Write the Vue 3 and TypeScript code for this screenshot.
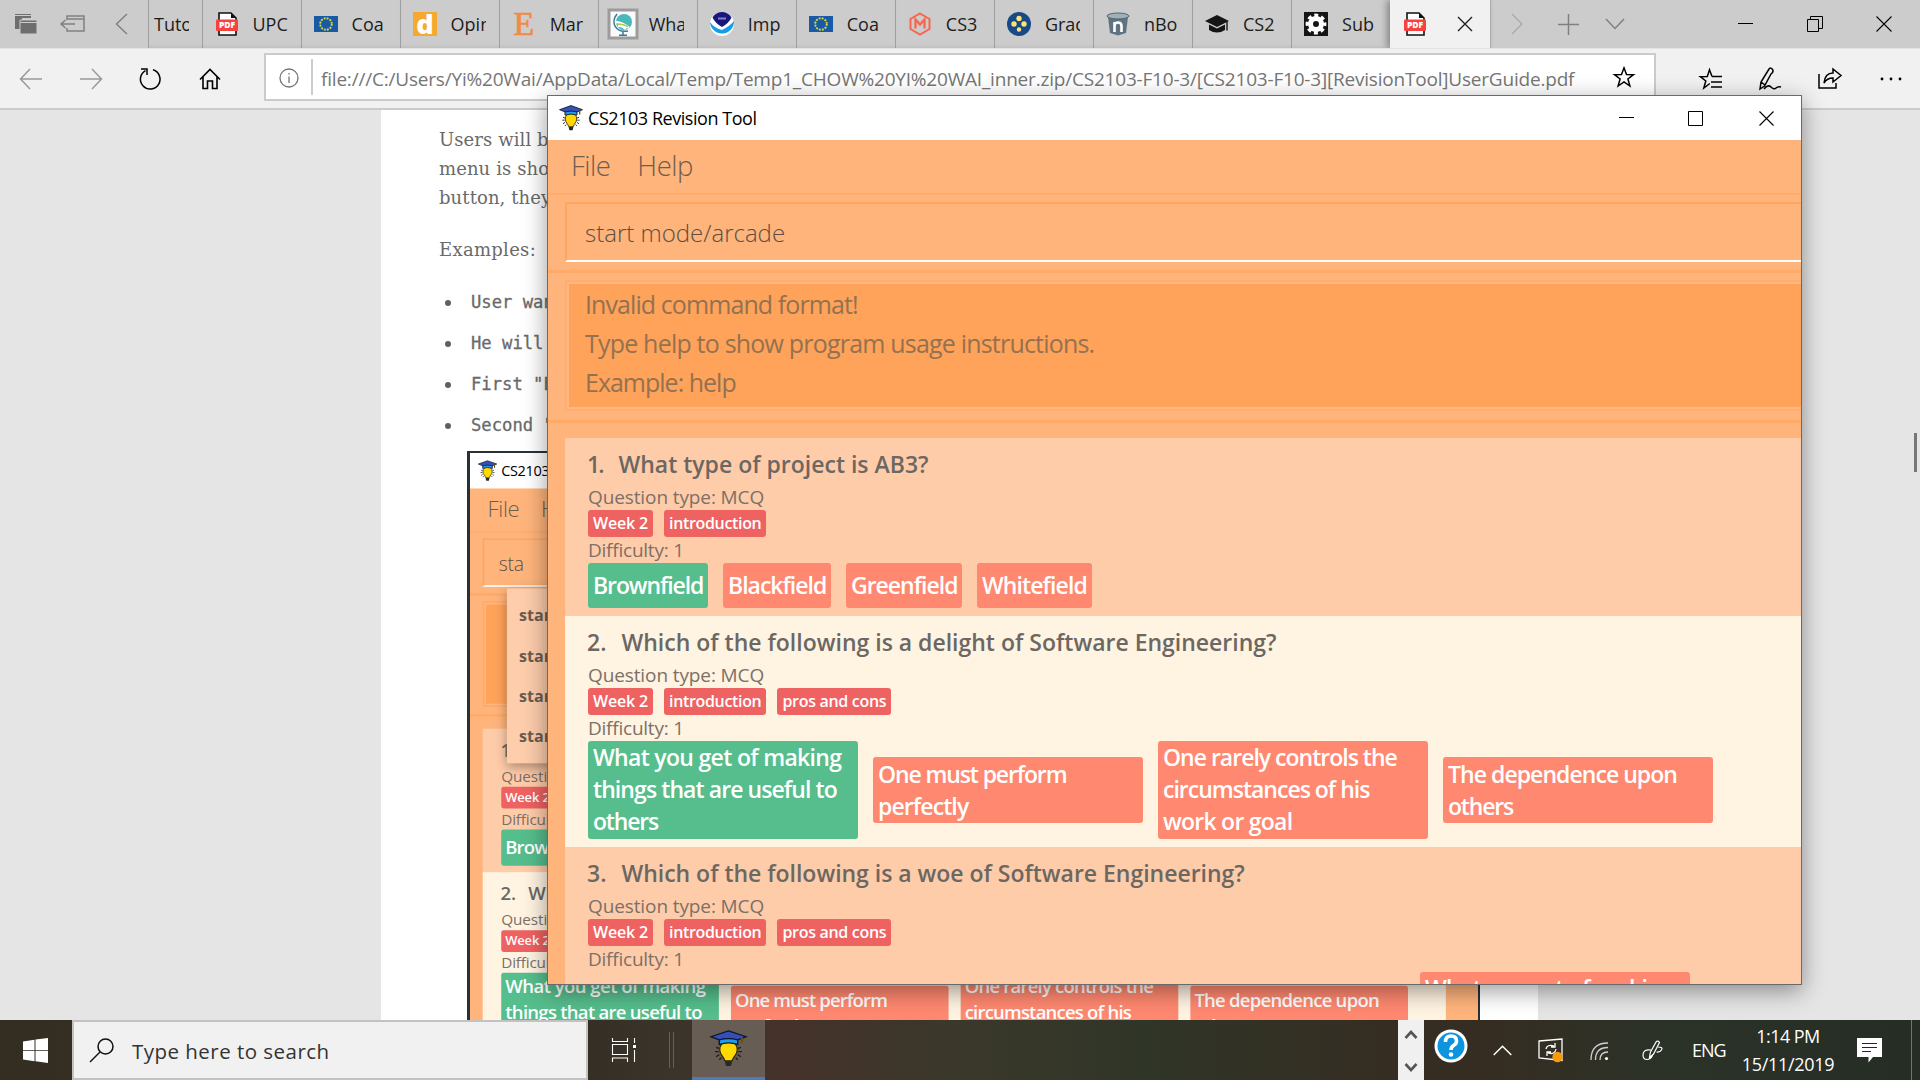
<script setup lang="ts">
interface Tag { text: string; w: number }
interface Line { text: string; w: number }
interface Answer { lines: Line[]; w: number; ok?: boolean }
interface Question { n: string; title: string; nw: number; gap: number; w: number; tags: Tag[]; answers: Answer[] }
interface ToolWindow { kind: string; input: string; inputW: number; result: Line[]; suggestions: string[] }

// Spreads the letters of a single line so that it fills the given width.
const vFit = {
  mounted(el: HTMLElement, binding: { value: number }) {
    const n = (el.textContent || '').length
    if (!n || !binding.value) return
    el.style.letterSpacing = '0px'
    const natural = el.offsetWidth
    el.style.letterSpacing = ((binding.value - natural) / n).toFixed(3) + 'px'
  },
}

const week: Tag = { text: 'Week 2', w: 55 }
const intro: Tag = { text: 'introduction', w: 92 }
const pros: Tag = { text: 'pros and cons', w: 104 }

const questions: Question[] = [
  {
    n: '1.', nw: 15, gap: 16, title: 'What type of project is AB3?', w: 310, tags: [week, intro],
    answers: [
      { w: 120, ok: true, lines: [{ text: 'Brownfield', w: 110 }] },
      { w: 108, lines: [{ text: 'Blackfield', w: 98 }] },
      { w: 116, lines: [{ text: 'Greenfield', w: 106 }] },
      { w: 115, lines: [{ text: 'Whitefield', w: 105 }] },
    ],
  },
  {
    n: '2.', nw: 19, gap: 15, title: 'Which of the following is a delight of Software Engineering?', w: 655, tags: [week, intro, pros],
    answers: [
      { w: 270, ok: true, lines: [{ text: 'What you get of making', w: 248 }, { text: 'things that are useful to', w: 244 }, { text: 'others', w: 65 }] },
      { w: 270, lines: [{ text: 'One must perform', w: 189 }, { text: 'perfectly', w: 90 }] },
      { w: 270, lines: [{ text: 'One rarely controls the', w: 234 }, { text: 'circumstances of his', w: 206 }, { text: 'work or goal', w: 129 }] },
      { w: 270, lines: [{ text: 'The dependence upon', w: 229 }, { text: 'others', w: 65 }] },
    ],
  },
  {
    n: '3.', nw: 19, gap: 15, title: 'Which of the following is a woe of Software Engineering?', w: 623, tags: [week, intro, pros],
    answers: [{ w: 270, lines: [{ text: 'What you get of making', w: 248 }, { text: 'things that are useful to', w: 244 }, { text: 'others', w: 65 }] }],
  },
]

const windows: ToolWindow[] = [
  { kind: 'inner', input: 'sta', inputW: 31, result: [], suggestions: ['start', 'start', 'start', 'start'] },
  {
    kind: 'main', input: 'start mode/arcade', inputW: 200, suggestions: [],
    result: [
      { text: 'Invalid command format!', w: 273 },
      { text: 'Type help to show program usage instructions.', w: 509 },
      { text: 'Example: help', w: 151 },
    ],
  },
]

const pdf = '<path d="M4 1h12l5 5v17H4z" fill="#fff" stroke="#111" stroke-width="1.6"/><path d="M16 1v5h5z" fill="#111"/><rect x="1" y="7.500" width="22" height="11.500" rx="1" fill="#f9423f"/><text x="12" y="16.300" text-anchor="middle" font-family="Open Sans, sans-serif" font-weight="800" font-size="8.500" fill="#fff">PDF</text>'
const eu = '<rect x="0" y="4" width="24" height="16" fill="#1a5aa5"/><circle cx="12" cy="12" r="5.800" fill="none" stroke="#d8d83a" stroke-width="1.900" stroke-dasharray="1.900 1.137"/>'

const tabs: { label: string; icon: string }[] = [
  { label: 'UPC', icon: pdf },
  { label: 'Coa', icon: eu },
  { label: 'Opin', icon: '<rect width="24" height="24" fill="#f5a930"/><text x="12" y="22" text-anchor="middle" font-family="Open Sans, sans-serif" font-weight="800" font-size="27" fill="#fff">d</text>' },
  { label: 'Mar', icon: '<text x="12" y="23" text-anchor="middle" font-family="Liberation Serif, serif" font-size="34" fill="#ef8b45" stroke="#ef8b45" stroke-width=".7">E</text>' },
  { label: 'Wha', icon: '<rect x="-2" y="-2" width="28" height="28" fill="#fafafa" stroke="#9c9c9c" stroke-width="3"/><circle cx="13" cy="10" r="8" fill="#48b8b9"/><path d="M5 10q7 1 13 6M7 14q4-1 8 3" stroke="#fff" stroke-width="2.500" fill="none"/><path d="M6 12q7 0 11 3" stroke="#a8cf45" stroke-width="1.500" fill="none"/><path d="M6 2c-7 9-1 19 11 17M12 20v3M8 23.300h8" stroke="#38799b" stroke-width="1.500" fill="none"/>' },
  { label: 'Imp', icon: '<circle cx="12" cy="12" r="12" fill="#fff"/><path d="M2.500 5.500Q6 0 12 0t9.500 5.500Q19 11 12 15 5 11 2.500 5.500z" fill="#19177c"/><path d="M0 10q4 6 12 8 8-4 12-9a12 12 0 0 1-24 1z" fill="#169de9"/><path d="M8 6.500h8" stroke="#8582c4" stroke-width="2"/>' },
  { label: 'Coa', icon: eu },
  { label: 'CS3', icon: '<path d="M12 1.500l9.500 5.500v10L12 22.500 2.500 17V7z" fill="none" stroke="#f7664e" stroke-width="2"/><path d="M7.500 16.500v-9l4.500 5 4.500-5v9" fill="none" stroke="#f7664e" stroke-width="2.300"/>' },
  { label: 'Grad', icon: '<circle cx="12" cy="12" r="12" fill="#174a86"/><g fill="#ffe174"><circle cx="12" cy="6.500" r="2.700"/><circle cx="7" cy="12" r="2.700"/><circle cx="17" cy="12" r="2.700"/><circle cx="12" cy="17.500" r="2.200"/></g>' },
  { label: 'nBo', icon: '<path d="M2 5h20l-2 16-8 2.500L4 21z" fill="#5e7480"/><ellipse cx="12" cy="4" rx="11" ry="3" fill="#9fb0b8" stroke="#52656f"/><path d="M8.500 20V10M8.500 14q0-3.500 3.500-3.500t3.500 3.500v6" fill="none" stroke="#fff" stroke-width="2.600"/>' },
  { label: 'CS2', icon: '<path d="M12 3l12 6-12 6L0 9z" fill="#151515"/><path d="M4 12.500v5.500q8 5 16 0v-5.500l-8 4z" fill="#151515"/><path d="M22 9.500v9" stroke="#151515" stroke-width="1.400"/>' },
  { label: 'Sub', icon: '<rect width="24" height="24" fill="#151515"/><circle cx="12" cy="12" r="5.500" fill="none" stroke="#fff" stroke-width="5"/><circle cx="12" cy="12" r="8.800" fill="none" stroke="#fff" stroke-width="3.200" stroke-dasharray="3.900 3.010" stroke-dashoffset="1.950"/>' },
]

const bulb = '<g stroke="#241d18" stroke-width="1.300" fill="none"><path d="M6 17l3 1M5 21h3.500M6 26l3-2M9 29l2-2M30 17l-3 1M31 21h-3.500M30 26l-3-2M27 29l-2-2"/></g><path d="M18 11c-6 0-8.500 4-8.500 8.500 0 5 4 6 5 10.500h7c1-4.500 5-5.500 5-10.500C26.500 15 24 11 18 11z" fill="#ffd900" stroke="#2a2200" stroke-width="1.200"/><path d="M14.500 30.500h7l-1 4.500h-5z" fill="#25292c"/><path d="M9 8h18v6q-9-3-18 0z" fill="#1e9df0" stroke="#10162a" stroke-width="1.300"/><path d="M18 .8l17.200 5.700L27 9.600q-9-2.600-18 0L.8 6.500z" fill="#3450b8" stroke="#10162a" stroke-width="1.200"/><path d="M31 7v6" stroke="#6e5300" stroke-width="2"/>'
</script>

<template>
  <div class="screen">
    <header class="tabbar">
      <div class="tab-tools">
        <svg class="i-stack" width="24" height="24" viewBox="0 0 24 24"><path d="M1 2h16v4h-9v11H1z" fill="#6e6e6e" /><path d="M1 3.500h16" stroke="#ccc" stroke-width="1" /><path d="M6 8h17v14H6z" fill="#6e6e6e" stroke="#ccc" /><path d="M6 10.500h17" stroke="#ccc" stroke-width="1" /></svg>
        <svg class="i-aside" width="26" height="20" viewBox="0 0 26 20" fill="none" stroke="#808080" stroke-width="1.500"><path d="M7 6V2h17v15H7v-3M7 5h17M1 10h14M5.500 6L1 10l4.500 4" /></svg>
        <svg class="i-prev" width="13" height="22" viewBox="0 0 13 22" fill="none" stroke="#808080" stroke-width="1.500"><path d="M12 1L1.500 11 12 21" /></svg>
      </div>
      <div class="tab first"><span class="tab-label">Tuto</span></div>
      <div v-for="(t, i) in tabs" :key="i" class="tab">
        <svg class="fav" width="24" height="24" viewBox="0 0 24 24" v-html="t.icon"></svg>
        <span class="tab-label">{{ t.label }}</span>
      </div>
      <div class="tab active">
        <svg class="fav" width="24" height="24" viewBox="0 0 24 24" v-html="pdf"></svg>
        <svg class="tab-x" width="16" height="16" viewBox="0 0 16 16" stroke="#222" stroke-width="1.400"><path d="M1 1l14 14M15 1L1 15" /></svg>
      </div>
      <div class="tab-end">
        <svg class="e-next" width="13" height="22" viewBox="0 0 13 22" fill="none" stroke="#a8a8a8" stroke-width="1.300"><path d="M1 1l10 10L1 21" /></svg>
        <svg class="e-plus" width="21" height="21" viewBox="0 0 21 21" stroke="#808080" stroke-width="1.500"><path d="M0 10.500h21M10.500 0v21" /></svg>
        <svg class="e-down" width="20" height="12" viewBox="0 0 20 12" fill="none" stroke="#808080" stroke-width="1.500"><path d="M1 1l9 9.500L19 1" /></svg>
        <svg class="e-min" width="15" height="2" viewBox="0 0 15 2"><path d="M0 .5h15" stroke="#000" stroke-width="1" /></svg>
        <svg class="e-res" width="16" height="16" viewBox="0 0 16 16" fill="none" stroke="#000"><path d="M.5 3.500h11v12H.5zM3.500 3.500V.5h12v12h-4" /></svg>
        <svg class="e-close" width="16" height="16" viewBox="0 0 16 16" stroke="#000" stroke-width="1.100"><path d="M.5.5l15 15M15.500.5l-15 15" /></svg>
      </div>
    </header>

    <nav class="toolbar">
      <svg class="t-back" width="24" height="22" viewBox="0 0 24 22" fill="none" stroke="#999" stroke-width="1.500"><path d="M23 11H1.500M11 1L1.500 11 11 21" /></svg>
      <svg class="t-fwd" width="24" height="22" viewBox="0 0 24 22" fill="none" stroke="#999" stroke-width="1.500"><path d="M1 11h21.500M13 1l9.500 10L13 21" /></svg>
      <svg class="t-ref" width="22" height="22" viewBox="0 0 22 22" fill="none" stroke="#000" stroke-width="1.500"><path d="M14 1.800A9.800 9.800 0 1 1 6.500 2.600M2 1h6v6" /></svg>
      <svg class="t-home" width="22" height="22" viewBox="0 0 22 22" fill="none" stroke="#000" stroke-width="1.600"><path d="M1 11.500L11 1.500l10 10M4 9v11.500h4.500V13h5v7.500H18V9" /></svg>
      <div class="address">
        <svg class="a-info" width="20" height="20" viewBox="0 0 20 20" fill="none" stroke="#767676" stroke-width="1.300"><circle cx="10" cy="10" r="9" /><path d="M10 8.500V15M10 5v1.600" /></svg>
        <i class="a-line"></i>
        <span v-fit="1253" class="url">file:///C:/Users/Yi%20Wai/AppData/Local/Temp/Temp1_CHOW%20YI%20WAI_inner.zip/CS2103-F10-3/[CS2103-F10-3][RevisionTool]UserGuide.pdf</span>
        <svg class="a-star" width="22" height="22" viewBox="0 0 22 22" fill="none" stroke="#000" stroke-width="1.500"><path d="M11 1.800l2.500 6.700 7 .2-5.600 4.300 2 7-5.900-4.100L5.100 20l2-7L1.500 8.700l7-.2z" /></svg>
      </div>
      <svg class="t-fav" width="24" height="22" viewBox="0 0 24 22" fill="none" stroke="#000" stroke-width="1.500"><path d="M13 8.500L10.500 1.800 8.300 8.500l-7 .2L6.800 13l-2 7 6-4.500M13 8.500h10M12 14h11M12 19h11" /></svg>
      <svg class="t-pen" width="24" height="24" viewBox="0 0 24 24" fill="none" stroke="#000" stroke-width="1.500"><path d="M2 22l1-7L11 2q2-2 3.500.5T13 7L6.500 19zM3 15l4 3M6 22q4-5 7-2t5 1 5-1" /></svg>
      <svg class="t-share" width="24" height="23" viewBox="0 0 24 23" fill="none" stroke="#000" stroke-width="1.500"><path d="M1 7v14h17v-5M6 16q1-10 9-10V2l8 6.500L15 15v-4q-6 0-9 5z" /></svg>
      <svg class="t-dots" width="22" height="4" viewBox="0 0 22 4"><circle cx="2" cy="2" r="1.400" /><circle cx="11" cy="2" r="1.400" /><circle cx="20" cy="2" r="1.400" /></svg>
    </nav>

    <main class="viewer">
      <article class="paper">
        <p>Users will be<br />menu is shown<br />button, they</p>
        <p class="ex">Examples:</p>
        <ul>
          <li><b></b>User want</li>
          <li><b></b>He will</li>
          <li><b></b>First "E</li>
          <li><b></b>Second "</li>
        </ul>
      </article>
      <div class="thumb"></div>
    </main>

    <section v-for="w in windows" :key="w.kind" :class="['frame', w.kind]">
      <div class="win">
        <div class="title">
          <svg width="24" height="26" viewBox="0 0 36 36" preserveAspectRatio="none" v-html="bulb"></svg>
          <span v-fit="169" class="title-text">CS2103 Revision Tool</span>
          <svg class="w-min" width="15" height="2" viewBox="0 0 15 2"><path d="M0 .5h15" stroke="#000" /></svg>
          <svg class="w-max" width="15" height="15" viewBox="0 0 15 15" fill="none" stroke="#000"><path d="M.5.5h14v14H.5z" /></svg>
          <svg class="w-close" width="15" height="15" viewBox="0 0 15 15" stroke="#000" stroke-width="1.100"><path d="M.5.5l14 14M14.500.5l-14 14" /></svg>
        </div>
        <div class="menu"><span v-fit="39">File</span><span v-fit="55">Help</span></div>
        <div class="command"><div class="field"><span v-fit="w.inputW">{{ w.input }}</span></div></div>
        <div class="result">
          <div class="result-box">
            <div v-for="r in w.result" :key="r.text"><span v-fit="r.w">{{ r.text }}</span></div>
          </div>
        </div>
        <div class="list">
          <div v-for="q in questions" :key="q.n" class="row">
            <div class="q-title"><span v-fit="q.nw">{{ q.n }}</span><span v-fit="q.w" :style="{ marginLeft: q.gap + 'px' }">{{ q.title }}</span></div>
            <div class="q-type"><span v-fit="176">Question type: MCQ</span></div>
            <div class="tags"><div v-for="t in q.tags" :key="t.text" class="tag"><span v-fit="t.w">{{ t.text }}</span></div></div>
            <div class="q-diff"><span v-fit="96">Difficulty: 1</span></div>
            <div class="answers" :class="{ late: q.n === '3.' }">
              <div v-for="(a, i) in q.answers" :key="i" :class="['answer', { ok: a.ok, single: a.lines.length === 1, pair: a.lines.length === 2 }]" :style="{ width: a.w + 'px' }">
                <div v-for="l in a.lines" :key="l.text" class="line"><span v-fit="l.w">{{ l.text }}</span></div>
              </div>
            </div>
          </div>
        </div>
        <div v-if="w.suggestions.length" class="popup"><div v-for="(s, i) in w.suggestions" :key="i">{{ s }}</div></div>
      </div>
    </section>

    <footer class="taskbar">
      <div class="start"><svg width="25" height="25" viewBox="0 0 25 25" fill="#fff"><path d="M0 3.500l11.500-1.700v10.400H0zM12.500 1.600L25 0v12.200H12.500zM0 13h11.500v10.300L0 21.600zM12.500 13H25v12l-12.500-1.700z" /></svg></div>
      <div class="search">
        <svg width="25" height="25" viewBox="0 0 25 25" fill="none" stroke="#111" stroke-width="1.500"><circle cx="16.500" cy="8.500" r="7.500" /><path d="M11 14L1 24" /></svg>
        <span v-fit="198">Type here to search</span>
      </div>
      <svg class="taskview" width="25" height="24" viewBox="0 0 25 24" fill="none" stroke="#fff" stroke-width="1.100"><path d="M.5 0v3.500h15V0M.5 6.500h15v10H.5zM.5 24v-4h15v4M22.500 0v5M22.500 12v12" /><path d="M21 7h3v3h-3z" fill="#fff" stroke="none" /></svg>
      <div class="grip"></div>
      <div class="app"><svg width="37" height="37" viewBox="0 0 36 36" v-html="bulb"></svg></div>
      <div class="spin">
        <svg width="14" height="9" viewBox="0 0 14 9" fill="none" stroke="#555" stroke-width="2.600"><path d="M1.500 8L7 2l5.500 6" /></svg>
        <svg width="14" height="9" viewBox="0 0 14 9" fill="none" stroke="#555" stroke-width="2.600"><path d="M1.500 1L7 7l5.500-6" /></svg>
      </div>
      <svg class="help" width="34" height="34" viewBox="0 0 34 34"><circle cx="17" cy="17" r="16.500" fill="#fff" /><circle cx="17" cy="17" r="13.500" fill="#0c95de" /><path d="M11.500 13q0-6 5.500-6t5.500 5q0 3-3 4.500-2.500 1.500-2.500 4.500" fill="none" stroke="#fff" stroke-width="3.600" /><circle cx="17" cy="25.500" r="2.300" fill="#fff" /></svg>
      <svg class="caret" width="19" height="11" viewBox="0 0 19 11" fill="none" stroke="#fff" stroke-width="1.500"><path d="M.7 10L9.500 1.200 18.300 10" /></svg>
      <svg class="sync" width="26" height="25" viewBox="0 0 26 25" fill="none" stroke="#fff" stroke-width="1.300"><path d="M1 3l23-2v21.500L1 20z" /><path d="M8 11q1-5 8-3M17 5v4h-4M18 11q-1 6-8 4M9 18v-4h4" /><circle cx="19.500" cy="19" r="5.200" fill="#f99a0c" stroke="none" /></svg>
      <svg class="wifi" width="19" height="19" viewBox="0 0 19 19" fill="none" stroke="#d0d0d0" stroke-width="1.300"><path d="M1 18Q1 1 18 1M5.500 18Q5.500 5.500 18 5.500M10 18q0-8 8-8" /><circle cx="16.500" cy="16.500" r="1.600" fill="#fff" stroke="none" /></svg>
      <svg class="ink" width="21" height="21" viewBox="0 0 21 21" fill="none" stroke="#fff" stroke-width="1.200"><path d="M7.500 17.500l.8-5L14 2q2-2 3.500.5L11.500 14zM9 10q-8-1-8 5 0 4.500 4 4.500 3.500 0 5.500-4M16 7q5.500 0 3.500 3-1.500 2.500-5 2" /></svg>
      <div class="lang"><span v-fit="34">ENG</span></div>
      <div class="clock"><div><span v-fit="63">1:14 PM</span></div><div><span v-fit="93">15/11/2019</span></div></div>
      <svg class="note" width="25" height="25" viewBox="0 0 25 25"><path d="M0 0h25v19h-9l-4.500 5.500V19H0z" fill="#fff" /><path d="M5 5.500h15M5 9.500h15M5 13.500h9" stroke="#222b22" stroke-width="1.200" /></svg>
      <div class="desk"></div>
    </footer>
  </div>
</template>

<style>
body { margin: 0; overflow: hidden; }
</style>

<style scoped>
.screen { position: relative; width: 1920px; height: 1080px; overflow: hidden; background: #e5e5e5; font-family: "Open Sans", "Noto Sans", sans-serif; display: flex; flex-direction: column; }
svg { display: block; flex: none; overflow: visible; }
span { white-space: nowrap; display: inline-block; }

.tabbar { flex: none; height: 48px; background: #ccc; display: flex; box-sizing: border-box; }
.tab-tools { width: 148px; flex: none; display: flex; align-items: center; }
.i-stack { margin-left: 14px; }
.i-aside { margin-left: 22px; }
.i-prev { margin-left: 29px; }
.tab { width: 99.060px; box-sizing: border-box; flex: none; border-left: 1px solid #a0a0a0; display: flex; align-items: center; padding-left: 12px; box-shadow: inset 0 -4px 4px -3px #bbb; }
.tab.first { width: 53.500px; padding-left: 5px; }
.fav { margin-right: 14px; }
.tab-label { width: 35px; overflow: hidden; font-size: 18px; line-height: 26px; color: #1c1c1c; margin-top: -1px; }
.tab.active { width: 100px; background: #f1f1f1; padding-left: 13px; border-left: 0; box-shadow: -3px 0 7px rgba(0, 0, 0, .35); }
.tab.active .fav { margin-right: 30px; }
.tab-end { display: flex; align-items: center; flex: 1; border-left: 1px solid #aaa; }
.e-next { margin-left: 20px; }
.e-plus { margin-left: 34px; }
.e-down { margin-left: 26px; }
.e-min { margin-left: 113px; }
.e-res { margin-left: 54px; }
.e-close { margin-left: 53px; }

.toolbar { flex: none; height: 62px; box-sizing: border-box; background: #f1f1f1; border-bottom: 2px solid #cbcbcb; border-top: 1px solid #e4e4e4; display: flex; align-items: center; }
.t-back { margin-left: 19px; }
.t-fwd { margin-left: 36px; }
.t-ref { margin-left: 36px; }
.t-home { margin-left: 38px; }
.address { margin-left: 43px; width: 1392px; height: 48px; margin-top: -3px; border: 2px solid #cbcbcb; box-sizing: border-box; background: #fff; display: flex; align-items: center; flex: none; }
.a-info { margin-left: 13px; margin-top: 2px; }
.a-line { width: 2px; height: 36px; background: #ccc; margin-left: 12px; flex: none; }
.url { margin-left: 8px; margin-top: 3px; font-size: 19px; line-height: 30px; color: #767676; }
.a-star { margin-left: 39px; }
.t-fav { margin-left: 43px; }
.t-pen { margin-left: 35px; }
.t-share { margin-left: 36px; }
.t-dots { margin-left: 38px; }

.viewer { flex: 1; display: flex; justify-content: space-between; padding-left: 381px; }
.paper { width: 1157px; background: #fff; box-sizing: border-box; padding: 15px 0 0 58px; font-family: "DejaVu Serif", serif; color: #6a6a6a; font-size: 18px; line-height: 29px; }
.paper p { margin: 0; letter-spacing: .1px; }
.paper .ex { margin-top: 23px; letter-spacing: .3px; }
.paper ul { list-style: none; margin: 18px 0 0; padding: 0; font-family: "DejaVu Sans Mono", monospace; font-size: 17.200px; }
.paper li { display: flex; align-items: center; height: 41px; white-space: pre; -webkit-text-stroke: .3px #6a6a6a; }
.paper b { width: 6px; height: 6px; border-radius: 50%; background: #606060; margin: 0 20px 0 6px; }
.thumb { width: 3px; height: 39px; margin: 323px 3px 0 0; background: #777; }

.frame { position: absolute; overflow: hidden; }
.frame.main { left: 547px; top: 95px; width: 1253px; height: 888px; border: 1px solid #6a6a6a; box-shadow: 0 6px 22px rgba(0, 0, 0, .4); }
.frame.inner { left: 467px; top: 451px; width: 1008px; height: 567px; border: 2px solid #26313a; border-left-width: 3px; border-bottom: 0; }
.inner .win { width: 1252px; height: 720px; margin-left: -1px; transform: scale(.806); transform-origin: 0 0; }
.win { position: relative; width: 1253px; height: 888px; background: #ffb47c; display: flex; flex-direction: column; overflow: hidden; }
.title { height: 44px; flex: none; background: #fff; display: flex; align-items: center; padding-left: 11px; }
.title-text { font-size: 18px; line-height: 26px; margin-left: 5px; color: #000; }
.w-min { margin-left: auto; }
.w-max { margin-left: 54px; }
.w-close { margin: 0 27px 0 56px; }
.menu { height: 53px; flex: none; border-bottom: 2px solid #ffac6d; display: flex; align-items: flex-start; padding-left: 23px; gap: 27px; font-size: 27.500px; font-weight: 300; color: #6f5d4e; line-height: 51px; }
.command { height: 78px; flex: none; padding: 7px 0 0 17px; border-bottom: 3px solid #ffaa66; box-sizing: border-box; }
.field { height: 60px; box-sizing: border-box; border: 2px solid #ffa55c; border-right: 0; border-bottom: 2px solid #fff; padding-left: 18px; font-size: 24px; line-height: 57px; font-weight: 300; color: #5c4f45; }
.result { height: 150px; flex: none; box-sizing: border-box; padding: 7px 0 9px 17px; border-bottom: 3px solid #ffaa66; margin-bottom: 15px; }
.result-box { box-sizing: border-box; height: 131px; border: 2px solid #ffad70; border-right: 0; box-shadow: inset 2px 2px #ffb880, inset 0 -2px #ffb880; background: #ffa35b; padding: 3px 0 0 18px; font-size: 25px; line-height: 39.200px; font-weight: 400; color: #94714f; }
.list { flex: none; margin-left: 17px; }
.inner .list { margin-right: 40px; }
.inner .result { padding-right: 40px; }
.row { background: #ffccaa; padding: 10px 0 8px 23px; color: #746a62; }
.row:nth-child(even) { background: #fff3e2; }
.q-title { font-size: 23px; font-weight: 600; line-height: 32px; height: 32px; display: flex; color: #6b6762; margin: 0 0 4px -1px; }
.q-type { font-size: 19px; line-height: 27px; height: 25px; margin-bottom: 1px; }
.q-type, .q-diff { font-weight: 400; color: #7c7067; }
.q-diff { font-size: 19px; line-height: 26px; height: 26px; }
.tags { display: flex; gap: 11px; }
.tag { height: 27px; background: #ee6262; border-radius: 3px; color: #fff; font-size: 16px; font-weight: 600; line-height: 27px; padding: 0 5px; }
.answers { display: flex; gap: 15px; align-items: center; }
.answers.late { margin-left: 832px; }
.answer { box-sizing: border-box; background: #ff8870; color: #fff; border-radius: 3px; padding: 1px 5px; font-size: 23px; font-weight: 600; line-height: 32px; flex: none; }
.answer.single { height: 45px; padding-top: 7px; }
.answer.pair { padding: 2px 5px 0; }
.answer.ok { background: #56bd8c; }
.line { height: 32px; margin-top: -1px; margin-bottom: 1px; }
.popup { position: absolute; left: 47px; top: 168px; width: 400px; height: 217px; box-sizing: border-box; padding-top: 9px; background: #fdcdac; box-shadow: 0 5px 14px rgba(0, 0, 0, .35); }
.popup div { height: 50px; line-height: 50px; padding-left: 15px; font-weight: 700; font-size: 20px; color: #6b5c50; }

.taskbar { position: relative; flex: none; height: 60px; display: flex; align-items: center; background: linear-gradient(90deg, #342d22 0, #352f25 31%, #3a342a 35%, #45322a 41%, #3a382a 50%, #2f3527 60%, #352d22 72%, #352d22 78%, #2b3228 87%, #262d25 100%); color: #fff; }
.start { width: 72px; display: flex; padding-left: 23px; box-sizing: border-box; }
.search { width: 516px; height: 60px; box-sizing: border-box; background: #f1f1f1; border: 2px solid #c2c2c2; display: flex; align-items: center; padding-left: 15px; gap: 18px; font-size: 20.500px; line-height: 30px; color: #333; flex: none; }
.search span { margin-top: 1px; }
.taskview { margin-left: 24px; }
.grip { width: 3px; height: 36px; border: solid #66605a; border-width: 0 1px; margin-left: 32px; }
.app { width: 73px; height: 60px; box-sizing: border-box; background: #685d54; border-bottom: 3px solid #5079b8; margin-left: 18px; display: flex; align-items: center; justify-content: center; }
.spin { width: 26px; height: 60px; margin-left: 633px; background: #f0f0f0; display: flex; flex-direction: column; align-items: center; justify-content: space-between; padding: 10px 0 8px; box-sizing: border-box; flex: none; }
.help { margin: -8px 0 0 10px; }
.caret { margin-left: 25px; }
.sync { margin-left: 26px; }
.wifi { margin-left: 26px; margin-top: 3px; }
.ink { margin-left: 33px; }
.lang { margin-left: 29px; font-size: 18px; width: 34px; line-height: 26px; }
.clock { margin-left: 15px; width: 94px; text-align: center; font-size: 18px; line-height: 28px; }
.note { margin-left: 22px; }
.desk { width: 1px; height: 60px; border-left: 1px solid #70756e; margin-left: 29px; }
</style>
